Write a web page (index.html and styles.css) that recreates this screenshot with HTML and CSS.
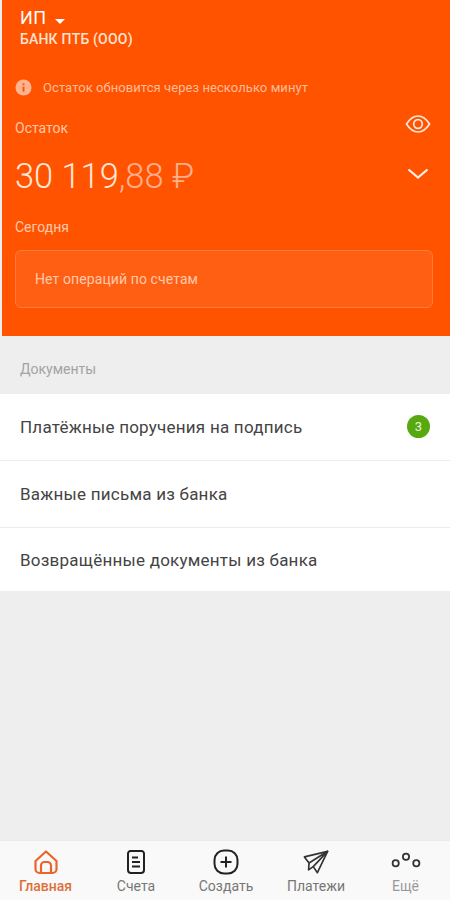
FILE: index.html
```html
<!DOCTYPE html>
<html lang="ru">
<head>
<meta charset="utf-8">
<title>Главная</title>
<link rel="stylesheet" href="styles.css">
</head>
<body>
<div class="app">
  <header class="hero">
    <div class="org">
      <div class="org-name">ИП <span class="caret"></span></div>
      <div class="org-bank">БАНК ПТБ (ООО)</div>
    </div>
    <div class="notice">
      <svg class="notice-icon" viewBox="0 0 18 18"><circle cx="9" cy="9" r="8.5" fill="#ffb48f"/><rect x="8" y="8" width="2" height="5.5" fill="#ff5500"/><rect x="8" y="4.6" width="2" height="2" fill="#ff5500"/></svg>
      <span>Остаток обновится через несколько минут</span>
    </div>
    <div class="balance-head">
      <span class="balance-label">Остаток</span>
      <svg class="eye" viewBox="0 0 26 20" fill="none" stroke="#ffe9dc" stroke-width="1.7"><path d="M1.5 10 C5 4.5 9 2 13 2 S21 4.5 24.500 10 C21 15.500 17 18 13 18 S5 15.500 1.500 10Z"/><circle cx="13" cy="10" r="4.300"/></svg>
    </div>
    <div class="balance-row">
      <div class="amount">30 119<span class="amount-frac">,88 ₽</span></div>
      <svg class="chevron" viewBox="0 0 22 12" fill="none" stroke="#fff3ea" stroke-width="2.200"><path d="M1.500 1.500 L11 9.500 L20.500 1.500"/></svg>
    </div>
    <div class="today">Сегодня</div>
    <div class="ops">Нет операций по счетам</div>
  </header>
  <main class="content">
    <div class="section-title">Документы</div>
    <ul class="doc-list">
      <li class="doc-item"><span>Платёжные поручения на подпись</span><span class="badge">3</span></li>
      <li class="doc-item"><span>Важные письма из банка</span></li>
      <li class="doc-item"><span>Возвращённые документы из банка</span></li>
    </ul>
  </main>
  <nav class="tabs">
    <div class="tab tab-active">
      <svg viewBox="0 0 26 26" fill="none" stroke="#e8662c" stroke-width="2.200" stroke-linejoin="round"><path d="M2.500 12 L13 2.500 L23.500 12 V20 A4 4 0 0 1 19.500 24 H6.500 A4 4 0 0 1 2.500 20Z"/><path d="M8 24 V16.500 A3.500 3.500 0 0 1 11.500 13 H14.500 A3.500 3.500 0 0 1 18 16.500 V24"/></svg>
      <span>Главная</span>
    </div>
    <div class="tab">
      <svg viewBox="0 0 26 26" fill="none" stroke="#222" stroke-width="2"><path d="M7.500 2 H18.500 A2.500 2.500 0 0 1 21 4.500 V21 A3 3 0 0 1 18 24 H8 A3 3 0 0 1 5 21 V4.500 A2.500 2.500 0 0 1 7.500 2Z"/><path d="M9 8.500 H15 M9 13 H17 M9 17.500 H17"/></svg>
      <span>Счета</span>
    </div>
    <div class="tab">
      <svg viewBox="0 0 26 26" fill="none" stroke="#222" stroke-width="2"><rect x="1.500" y="1.500" width="23" height="23" rx="9.500"/><path d="M13 7.500 V18.500 M7.500 13 H18.500"/></svg>
      <span>Создать</span>
    </div>
    <div class="tab">
      <svg viewBox="0 0 28 26" fill="none" stroke="#333" stroke-width="1.800" stroke-linejoin="round"><path d="M1.500 7.500 L26.500 1.500 L15.500 24.500 L11 18 L6 21.500 L6.500 14Z"/><path d="M6.500 14 L26.500 1.500 L11 18"/></svg>
      <span>Платежи</span>
    </div>
    <div class="tab">
      <svg class="more" viewBox="0 0 32 18" fill="none" stroke="#333" stroke-width="1.900"><circle cx="5" cy="12" r="3.300"/><circle cx="16" cy="5" r="3.300"/><circle cx="27" cy="12" r="3.300"/></svg>
      <span class="tab-muted">Ещё</span>
    </div>
  </nav>
</div>
</body>
</html>
```
FILE: styles.css
```css
* { box-sizing: border-box; }
html, body { margin: 0; padding: 0; }
body { font-family: Roboto, "Liberation Sans", sans-serif; background: #eeeeee; }
.app { width: 450px; height: 900px; display: flex; flex-direction: column; overflow: hidden; background: #eeeeee; }

.hero { height: 336px; margin-left: 2px; background: #ff5300; color: #fff; padding: 6px 17px 0 13px; display: flex; flex-direction: column; }
.org { padding-left: 5px; }
.org-name { font-size: 18px; line-height: 24px; letter-spacing: .3px; display: flex; align-items: center; gap: 9px; color: #fff; }
.caret { width: 0; height: 0; margin-top: 6px; border-left: 5.500px solid transparent; border-right: 5.500px solid transparent; border-top: 5px solid #fff; }
.org-bank { font-size: 14px; line-height: 17px; margin-top: 1px; font-weight: 500; color: #ffe3d2; letter-spacing: .2px; }

.notice { display: flex; align-items: center; gap: 11px; margin-top: 31px; font-size: 13px; line-height: 16px; color: #ffbd9b; letter-spacing: .07px; }
.notice-icon { width: 17px; height: 17px; flex: none; }

.balance-head { display: flex; justify-content: space-between; align-items: center; margin-top: 17px; height: 26px; }
.balance-label { font-size: 14px; color: #ffc9ad; margin-top: 4px; }
.eye { width: 26px; height: 20px; margin-right: 2px; margin-top: -4px; }

.balance-row { display: flex; justify-content: space-between; align-items: center; margin-top: 17px; height: 40px; }
.amount { font-size: 34.400px; line-height: 40px; font-weight: 300; color: #ffe7da; white-space: nowrap; }
.amount-frac { color: #ffb08c; }
.chevron { width: 22px; height: 12px; margin-right: 4px; margin-top: -4px; }

.today { font-size: 14px; line-height: 18px; margin-top: 22px; color: #ffc9ad; }
.ops { margin-top: 14px; height: 58px; border: 1px solid #ff7a3a; border-radius: 6px; background: #ff5f12; padding-left: 19px; display: flex; align-items: center; font-size: 14px; color: #ffc9ad; letter-spacing: .1px; }

.content { flex: 1; }
.section-title { height: 58px; padding: 24px 0 0 20px; font-size: 14px; line-height: 18px; color: #a3a3a3; }
.doc-list { list-style: none; margin: 0; padding: 0; background: #fff; }
.doc-item { height: 67px; display: flex; align-items: center; justify-content: space-between; padding: 0 20px; font-size: 17px; color: #444; letter-spacing: .23px; border-top: 1px solid #ececec; }
.doc-item:first-child { height: 66px; border-top: 0; }
.doc-item:last-child { height: 64px; }
.badge { width: 23px; height: 23px; border-radius: 50%; background: #58a80f; color: #e8f5d8; font-size: 13px; display: flex; align-items: center; justify-content: center; letter-spacing: 0; margin-top: -1px; }

.tabs { height: 60px; background: #f9f9f9; border-top: 1px solid #ebebeb; display: grid; grid-template-columns: 91px 90px 90px 90px 89px; }
.tab { display: flex; flex-direction: column; align-items: center; gap: 3px; padding-top: 8px; font-size: 14px; line-height: 17px; color: #777; }
.tab svg { width: 26px; height: 26px; }
.tab svg.more { width: 30px; height: 17px; margin: 3px 0 6px; }
.tab-active { color: #dd6f3c; font-weight: 500; }
.tab-muted { color: #999; }
```
